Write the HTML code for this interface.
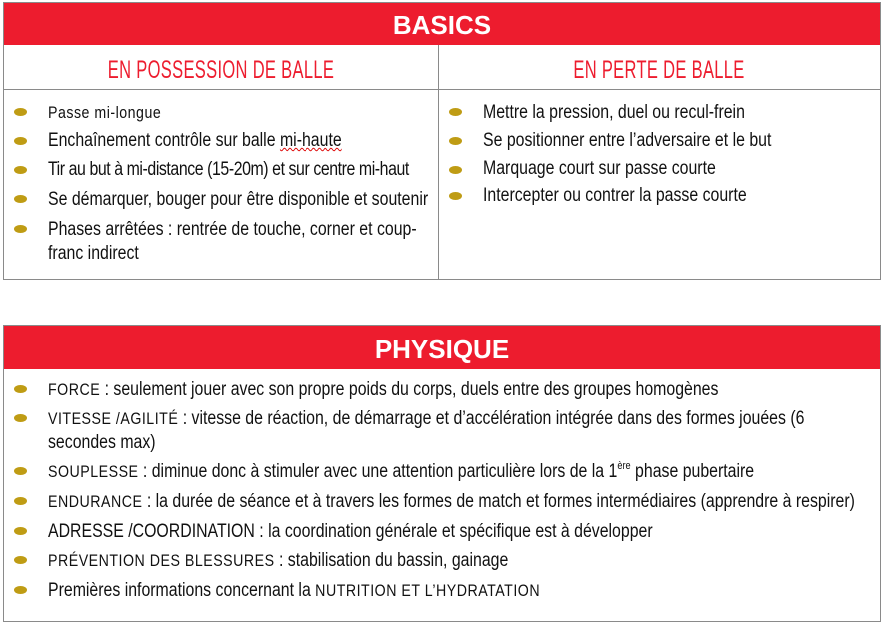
<!DOCTYPE html>
<html><head><meta charset="utf-8"><style>
body{margin:0;width:882px;height:622px;background:#fff;position:relative;overflow:hidden;font-family:"Liberation Sans",sans-serif;color:#111;}
.box{position:absolute;border:1px solid #8a8a8a;}
.red{position:absolute;background:#ed1c2e;color:#fff;font-family:"Liberation Sans",sans-serif;font-weight:bold;text-align:center;}
.t{position:absolute;font-size:19px;white-space:nowrap;line-height:22px;transform:scaleX(0.835);transform-origin:0 0;margin-top:1px;}
.b{position:absolute;width:13px;height:8px;border-radius:50%;background:#bf9c14;}
.sub{position:absolute;color:#ed1c2e;font-size:25px;text-align:center;letter-spacing:0.5px;transform:scaleX(0.66);}
.sc{font-size:17px;letter-spacing:0.6px}
sup{font-size:11px;line-height:0;vertical-align:0;position:relative;top:-8px}
</style></head><body>
<div class="box" style="left:3px;top:2px;width:876px;height:276px"></div>
<div class="red" style="left:4px;top:3px;width:876px;height:42px;font-size:26px;line-height:45px">BASICS</div>
<div style="position:absolute;left:4px;top:89px;width:876px;height:1px;background:#8a8a8a"></div>
<div style="position:absolute;left:438px;top:45px;width:1px;height:234px;background:#8a8a8a"></div>
<div class="sub" style="left:4px;top:56px;width:434px">EN POSSESSION DE BALLE</div>
<div class="sub" style="left:439px;top:56px;width:440px">EN PERTE DE BALLE</div>

<div class="b" style="left:14px;top:108px"></div><div class="t" style="left:48px;top:101px"><span class="sc">Passe mi-longue</span></div>
<div class="b" style="left:14px;top:137px"></div><div class="t" style="left:48px;top:129px">Enchaînement contrôle sur balle <span style="text-decoration:underline wavy #d00;text-decoration-thickness:1px">mi-haute</span></div>
<div class="b" style="left:14px;top:166px"></div><div class="t" style="left:48px;top:158px;letter-spacing:-0.5px">Tir au but à mi-distance (15-20m) et sur centre mi-haut</div>
<div class="b" style="left:14px;top:195px"></div><div class="t" style="left:48px;top:188px">Se démarquer, bouger pour être disponible et soutenir</div>
<div class="b" style="left:14px;top:225px"></div><div class="t" style="left:48px;top:218px">Phases arrêtées : rentrée de touche, corner et coup-</div>
<div class="t" style="left:48px;top:242px">franc indirect</div>

<div class="b" style="left:449px;top:108px"></div><div class="t" style="left:483px;top:101px">Mettre la pression, duel ou recul-frein</div>
<div class="b" style="left:449px;top:137px"></div><div class="t" style="left:483px;top:129px">Se positionner entre l’adversaire et le but</div>
<div class="b" style="left:449px;top:166px"></div><div class="t" style="left:483px;top:157px">Marquage court sur passe courte</div>
<div class="b" style="left:449px;top:192px"></div><div class="t" style="left:483px;top:184px">Intercepter ou contrer la passe courte</div>

<div class="box" style="left:3px;top:325px;width:876px;height:295px"></div>
<div class="red" style="left:4px;top:326px;width:876px;height:43px;font-size:26px;line-height:46px">PHYSIQUE</div>

<div class="b" style="left:14px;top:385px"></div><div class="t" style="left:48px;top:378px"><span class="sc">FORCE</span> : seulement jouer avec son propre poids du corps, duels entre des groupes homogènes</div>
<div class="b" style="left:14px;top:414px"></div><div class="t" style="left:48px;top:407px"><span class="sc">VITESSE /AGILITÉ</span> : vitesse de réaction, de démarrage et d’accélération intégrée dans des formes jouées (6</div>
<div class="t" style="left:48px;top:431px">secondes max)</div>
<div class="b" style="left:14px;top:467px"></div><div class="t" style="left:48px;top:460px"><span class="sc">SOUPLESSE</span> : diminue donc à stimuler avec une attention particulière lors de la 1<sup>ère</sup> phase pubertaire</div>
<div class="b" style="left:14px;top:497px"></div><div class="t" style="left:48px;top:490px"><span class="sc">ENDURANCE</span> : la durée de séance et à travers les formes de match et formes intermédiaires (apprendre à respirer)</div>
<div class="b" style="left:14px;top:527px"></div><div class="t" style="left:48px;top:520px">ADRESSE /COORDINATION : la coordination générale et spécifique est à développer</div>
<div class="b" style="left:14px;top:556px"></div><div class="t" style="left:48px;top:549px"><span class="sc">PRÉVENTION DES BLESSURES</span> : stabilisation du bassin, gainage</div>
<div class="b" style="left:14px;top:586px"></div><div class="t" style="left:48px;top:579px">Premières informations concernant la <span class="sc">NUTRITION ET L’HYDRATATION</span></div>
</body></html>
